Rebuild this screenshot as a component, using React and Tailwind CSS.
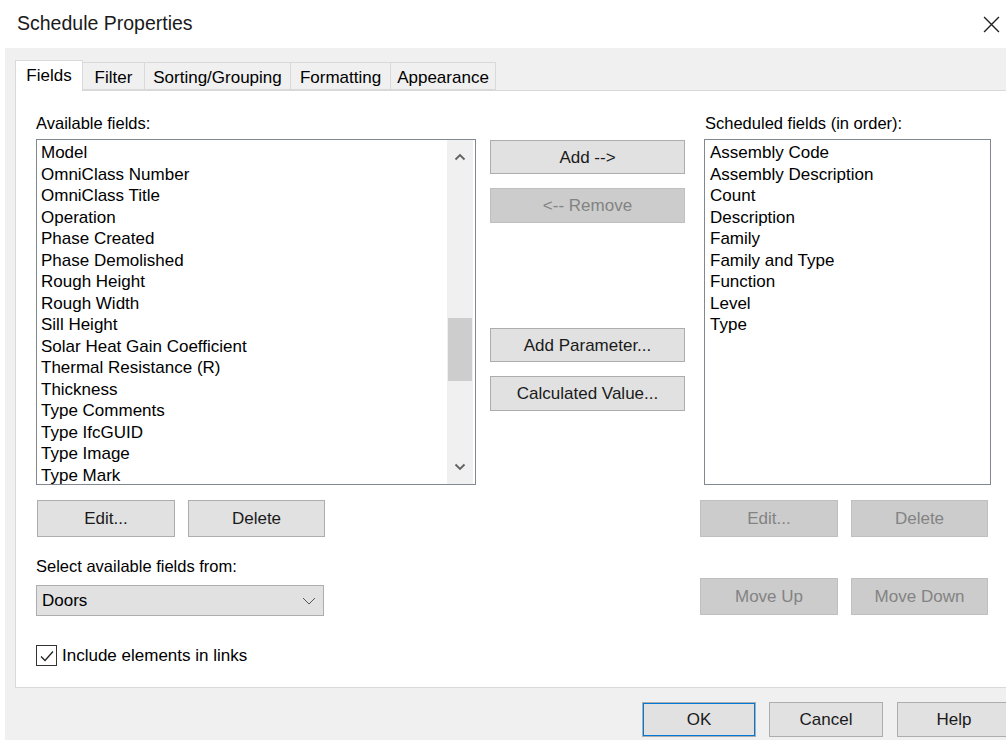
import React from "react";

const AVAILABLE = [
  "Model",
  "OmniClass Number",
  "OmniClass Title",
  "Operation",
  "Phase Created",
  "Phase Demolished",
  "Rough Height",
  "Rough Width",
  "Sill Height",
  "Solar Heat Gain Coefficient",
  "Thermal Resistance (R)",
  "Thickness",
  "Type Comments",
  "Type IfcGUID",
  "Type Image",
  "Type Mark",
];

const SCHEDULED = [
  "Assembly Code",
  "Assembly Description",
  "Count",
  "Description",
  "Family",
  "Family and Type",
  "Function",
  "Level",
  "Type",
];

const TABS = [
  { label: "Fields", w: "w-[68px]" },
  { label: "Filter", w: "w-[62px]" },
  { label: "Sorting/Grouping", w: "w-[146px]" },
  { label: "Formatting", w: "w-[100px]" },
  { label: "Appearance", w: "w-[105px]" },
];

const font = { fontFamily: '"Liberation Sans", Arial, sans-serif' };

const Btn = ({ children, disabled, className = "" }) => (
  <button
    className={`flex items-center justify-center border text-[17px] leading-none ${
      disabled
        ? "bg-[#cccccc] border-[#bfbfbf] text-[#838383]"
        : "bg-[#e1e1e1] border-[#adadad] text-[#1a1a1a]"
    } ${className}`}
  >
    {children}
  </button>
);

const Chevron = ({ up, className = "" }) => (
  <svg viewBox="0 0 12 8" className={className} fill="none" stroke="currentColor" strokeWidth="1.8">
    {up ? <path d="M1.5 6.5 6 2l4.5 4.5" /> : <path d="M1.5 1.5 6 6l4.5-4.5" />}
  </svg>
);

export default function App() {
  return (
    <div style={font} className="w-[1006px] h-[740px] bg-white flex flex-col overflow-hidden text-black">
      {/* Title bar */}
      <div className="h-[48px] shrink-0 flex items-center justify-between pl-[17px] pr-[6px]">
        <span className="text-[19.5px] text-[#1a1a1a]">Schedule Properties</span>
        <svg viewBox="0 0 16 16" className="w-[17px] h-[17px] text-[#222]" stroke="currentColor" strokeWidth="1.3">
          <path d="M1 1l14 14M15 1 1 15" />
        </svg>
      </div>

      {/* Dialog body */}
      <div className="ml-[5px] flex-1 bg-[#f0f0f0] flex flex-col pt-[12px] pl-[10px]">
        {/* Tabs */}
        <div className="flex items-end h-[30px] relative z-10">
          {TABS.map((t, i) =>
            i === 0 ? (
              <div
                key={t.label}
                className={`${t.w} h-[31px] -mb-[1px] bg-white border border-b-0 border-[#d9d9d9] flex items-center justify-center text-[17px] pb-[1px]`}
              >
                {t.label}
              </div>
            ) : (
              <div
                key={t.label}
                className={`${t.w} h-[28px] bg-[#f0f0f0] border border-l-0 border-[#d9d9d9] flex items-center justify-center text-[17px] pt-[3px]`}
              >
                {t.label}
              </div>
            )
          )}
        </div>

        {/* Tab panel */}
        <div className="h-[598px] bg-white border border-r-0 border-[#d9d9d9] pt-[22px] pl-[20px] flex flex-col">
          <div className="flex">
            {/* Available fields */}
            <div className="w-[440px] flex flex-col">
              <div className="h-[20px] leading-[20px] text-[16.5px] mb-[6px]">Available fields:</div>
              <div className="h-[346px] border border-[#828790] flex bg-white">
                <div className="flex-1 pl-[4px] pt-[2px] overflow-hidden">
                  {AVAILABLE.map((f) => (
                    <div key={f} className="h-[21.5px] leading-[21.5px] text-[17px] whitespace-nowrap">
                      {f}
                    </div>
                  ))}
                </div>
                <div className="w-[26px] bg-[#f0f0f0] flex flex-col items-center mr-[2px]">
                  <div className="h-[34px] flex items-center justify-center">
                    <Chevron up className="w-[12px] h-[8px] text-[#606060]" />
                  </div>
                  <div className="w-full h-[144px]" />
                  <div className="w-[24px] h-[63px] bg-[#cdcdcd]" />
                  <div className="flex-1" />
                  <div className="h-[34px] flex items-center justify-center">
                    <Chevron className="w-[12px] h-[8px] text-[#606060]" />
                  </div>
                </div>
              </div>
            </div>

            {/* Middle buttons */}
            <div className="w-[195px] ml-[14px] pt-[27px] flex flex-col">
              <Btn className="h-[34px]">Add --&gt;</Btn>
              <Btn disabled className="h-[35px] mt-[14px]">&lt;-- Remove</Btn>
              <Btn className="h-[34px] mt-[105px]">Add Parameter...</Btn>
              <Btn className="h-[35px] mt-[14px]">Calculated Value...</Btn>
            </div>

            {/* Scheduled fields */}
            <div className="w-[287px] ml-[19px] flex flex-col">
              <div className="h-[20px] leading-[20px] text-[16.5px] mb-[6px] pl-[1px]">Scheduled fields (in order):</div>
              <div className="h-[346px] border border-[#828790] bg-white pl-[5px] pt-[2px]">
                {SCHEDULED.map((f) => (
                  <div key={f} className="h-[21.5px] leading-[21.5px] text-[17px] whitespace-nowrap">
                    {f}
                  </div>
                ))}
              </div>
            </div>
          </div>

          <div className="flex">
            {/* Left controls */}
            <div className="w-[664px] flex flex-col">
              <div className="flex gap-[13px] mt-[15px] pl-[1px]">
                <Btn className="w-[138px] h-[37px]">Edit...</Btn>
                <Btn className="w-[137px] h-[37px]">Delete</Btn>
              </div>
              <div className="h-[20px] leading-[20px] text-[16.5px] mt-[19px]">Select available fields from:</div>
              <div className="w-[288px] h-[31px] mt-[9px] bg-[#e1e1e1] border border-[#adadad] flex items-center justify-between pl-[5px] pr-[7px]">
                <span className="text-[17px]">Doors</span>
                <svg viewBox="0 0 14 8" className="w-[14px] h-[8px] text-[#555]" fill="none" stroke="currentColor" strokeWidth="1">
                  <path d="M1 1l6 6 6-6" />
                </svg>
              </div>
              <div className="flex items-center mt-[27px]">
                <div className="w-[21px] h-[21px] border border-[#333] bg-white flex items-center justify-center">
                  <svg viewBox="0 0 14 12" className="w-[14px] h-[12px] text-[#222]" fill="none" stroke="currentColor" strokeWidth="1.3">
                    <path d="M1 6.5 5 10.5 13 1.5" />
                  </svg>
                </div>
                <span className="ml-[5px] text-[17px]">Include elements in links</span>
              </div>
            </div>

            {/* Right controls */}
            <div className="flex flex-col">
              <div className="flex gap-[13px] mt-[15px]">
                <Btn disabled className="w-[138px] h-[37px]">Edit...</Btn>
                <Btn disabled className="w-[137px] h-[37px]">Delete</Btn>
              </div>
              <div className="flex gap-[13px] mt-[41px]">
                <Btn disabled className="w-[138px] h-[37px]">Move Up</Btn>
                <Btn disabled className="w-[137px] h-[37px]">Move Down</Btn>
              </div>
            </div>
          </div>
        </div>

        {/* Footer */}
        <div className="flex mt-[14px] pl-[627px] gap-[13px]">
          <Btn className="w-[114px] h-[35px] shrink-0 border-[#0078d7] shadow-[inset_0_0_0_1px_#0078d7]">OK</Btn>
          <Btn className="w-[114px] h-[35px] shrink-0">Cancel</Btn>
          <Btn className="w-[114px] h-[35px] shrink-0 ml-[1px]">Help</Btn>
        </div>
      </div>
    </div>
  );
}
